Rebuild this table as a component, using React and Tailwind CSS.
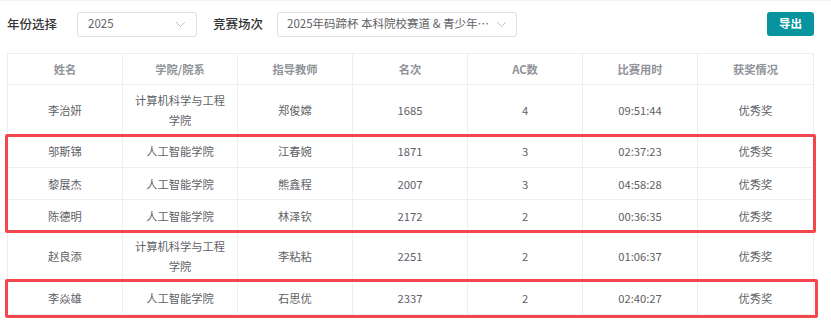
import React from 'react';

const FONT = { fontFamily: '"Noto Sans CJK SC", "Noto Sans", sans-serif' };

const COLUMNS = ['姓名', '学院/院系', '指导教师', '名次', 'AC数', '比赛用时', '获奖情况'];

const ROWS = [
  { h: 'h-[50px]', cells: ['李治妍', '计算机科学与工程\n学院', '郑俊嫦', '1685', '4', '09:51:44', '优秀奖'] },
  { h: 'h-[33px]', group: 1, cells: ['邬斯锦', '人工智能学院', '江春婉', '1871', '3', '02:37:23', '优秀奖'] },
  { h: 'h-[32px]', group: 1, cells: ['黎展杰', '人工智能学院', '熊鑫程', '2007', '3', '04:58:28', '优秀奖'] },
  { h: 'h-[32px]', group: 1, cells: ['陈德明', '人工智能学院', '林泽钦', '2172', '2', '00:36:35', '优秀奖'] },
  { h: 'h-[49px]', cells: ['赵良添', '计算机科学与工程\n学院', '李粘粘', '2251', '2', '01:06:37', '优秀奖'] },
  { h: 'h-[34px]', group: 2, cells: ['李焱雄', '人工智能学院', '石思优', '2337', '2', '02:40:27', '优秀奖'] },
];

function Chevron() {
  return (
    <svg width="11" height="7" viewBox="0 0 11 7" fill="none" className="shrink-0">
      <path d="M1 1l4.5 4.5L10 1" stroke="#c0c4cc" strokeWidth="1" />
    </svg>
  );
}

function Row({ row }) {
  return (
    <div className={`grid grid-cols-7 border-b border-[#ebeef5] ${row.h}`}>
      {row.cells.map((c, i) => (
        <div key={i} className={`flex items-center justify-center text-center whitespace-pre-line leading-[20px] ${i < 6 ? 'border-r border-[#ebeef5]' : ''}`}>
          {c}
        </div>
      ))}
    </div>
  );
}

function Group({ rows, extra }) {
  return (
    <div className="relative">
      {rows.map((r, i) => <Row key={i} row={r} />)}
      <div className={`absolute border-[3px] border-[#f4474d] rounded-[2px] pointer-events-none ${extra}`} />
    </div>
  );
}

export default function App() {
  const g1 = ROWS.filter((r) => r.group === 1);
  const g2 = ROWS.filter((r) => r.group === 2);
  return (
    <div className="w-[831px] h-[330px] bg-white border-t border-[#f3f3f3] overflow-hidden" style={FONT}>
      {/* Filters */}
      <div className="flex items-center h-[24px] mt-[11px] pl-[7px] w-[814px]">
        <span className="text-[12.5px] text-[#333] font-medium w-[70px]">年份选择</span>
        <div className="w-[120px] h-[25px] border border-[#dcdfe6] rounded-[3px] flex items-center justify-between pl-[10px] pr-[10px] text-[11.5px] text-[#606266]">
          <span>2025</span>
          <Chevron />
        </div>
        <span className="ml-[16px] text-[12.5px] text-[#333] font-medium w-[64px]">竞赛场次</span>
        <div className="w-[240px] h-[25px] border border-[#dcdfe6] rounded-[3px] flex items-center justify-between pl-[9px] pr-[9px] text-[11.5px] text-[#606266]">
          <span className="whitespace-nowrap">2025年码蹄杯 本科院校赛道 &amp; 青少年⋯</span>
          <Chevron />
        </div>
        <button className="ml-auto w-[47px] h-[24px] bg-[#08949e] rounded-[3px] text-white text-[11.5px] font-semibold">导出</button>
      </div>

      {/* Table */}
      <div className="ml-[7px] mt-[17px] w-[807px] border-l border-r border-t border-[#ebeef5] text-[11.25px] text-[#606266]">
        <div className="grid grid-cols-7 h-[31px] border-b border-[#ebeef5] text-[#909399] font-semibold">
          {COLUMNS.map((c, i) => (
            <div key={c} className={`flex items-center justify-center ${i < 6 ? 'border-r border-[#ebeef5]' : ''}`}>{c}</div>
          ))}
        </div>
        <Row row={ROWS[0]} />
        <Group rows={g1} extra="-left-[3px] -right-[3px] -top-[1px] -bottom-[1px]" />
        <Row row={ROWS[4]} />
        <Group rows={g2} extra="-left-[3px] -right-[5px] -top-[2px] -bottom-[3px]" />
      </div>
    </div>
  );
}
